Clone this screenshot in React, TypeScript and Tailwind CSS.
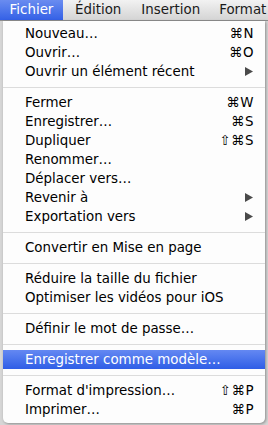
import { ReactNode } from 'react';

type Item =
  | { kind: 'sep' }
  | { kind: 'item'; label: string; shortcut?: string; sub?: boolean; active?: boolean };

const items: Item[] = [
  { kind: 'item', label: 'Nouveau…', shortcut: '⌘N' },
  { kind: 'item', label: 'Ouvrir…', shortcut: '⌘O' },
  { kind: 'item', label: 'Ouvrir un élément récent', sub: true },
  { kind: 'sep' },
  { kind: 'item', label: 'Fermer', shortcut: '⌘W' },
  { kind: 'item', label: 'Enregistrer…', shortcut: '⌘S' },
  { kind: 'item', label: 'Dupliquer', shortcut: '⇧⌘S' },
  { kind: 'item', label: 'Renommer…' },
  { kind: 'item', label: 'Déplacer vers…' },
  { kind: 'item', label: 'Revenir à', sub: true },
  { kind: 'item', label: 'Exportation vers', sub: true },
  { kind: 'sep' },
  { kind: 'item', label: 'Convertir en Mise en page' },
  { kind: 'sep' },
  { kind: 'item', label: 'Réduire la taille du fichier' },
  { kind: 'item', label: 'Optimiser les vidéos pour iOS' },
  { kind: 'sep' },
  { kind: 'item', label: 'Définir le mot de passe…' },
  { kind: 'sep' },
  { kind: 'item', label: 'Enregistrer comme modèle…', active: true },
  { kind: 'sep' },
  { kind: 'item', label: "Format d'impression…", shortcut: '⇧⌘P' },
  { kind: 'item', label: 'Imprimer…', shortcut: '⌘P' },
];

const Arrow = () => (
  <svg width="8" height="9" viewBox="0 0 8 9" className="mr-[1px]">
    <path d="M0 0 L8 4.5 L0 9 Z" fill="#4a4a4a" />
  </svg>
);

const BarLabel = ({ children, className }: { children: ReactNode; className: string }) => (
  <div className={'h-full flex items-center ' + className}>{children}</div>
);

const App = () => {
  return (
    <div
      className="w-[268px] h-[425px] overflow-hidden bg-[#d6d6d6] flex flex-col text-[13.4px] leading-none"
      style={{ fontFamily: '"Lucida Grande", "DejaVu Sans", sans-serif' }}
    >
      {/* Menu bar */}
      <div className="h-[21px] shrink-0 flex items-stretch whitespace-nowrap bg-gradient-to-b from-[#f2f2f2] to-[#d4d4d4] border-b border-[#8e8e8e] text-[#1a1a1a]">
        <BarLabel className="w-[63px] justify-center text-white bg-gradient-to-b from-[#6a8cf0] to-[#3460e6]">
          Fichier
        </BarLabel>
        <BarLabel className="ml-[12px]">Édition</BarLabel>
        <BarLabel className="ml-[20px]">Insertion</BarLabel>
        <BarLabel className="ml-[19px]">Format</BarLabel>
      </div>

      {/* Dropdown */}
      <div className="ml-[3px] w-[262px] flex-1 mb-[2px] bg-[#fdfdfd] rounded-b-[5px] shadow-[1px_1px_3px_rgba(0,0,0,0.35)] pt-[3px] pb-[4px] text-black">
        {items.map((it, i) =>
          it.kind === 'sep' ? (
            <div key={i} className="h-[12px] flex items-center">
              <div className="h-px w-full bg-[#dcdcdc]" />
            </div>
          ) : (
            <div
              key={i}
              className={
                'h-[19px] flex items-center justify-between pl-[22px] pr-[11px] ' +
                (it.active ? 'text-white bg-gradient-to-b from-[#6488f2] to-[#2f5de6]' : '')
              }
            >
              <span>{it.label}</span>
              {it.shortcut && <span className="tracking-[0.5px]">{it.shortcut}</span>}
              {it.sub && <Arrow />}
            </div>
          )
        )}
      </div>
    </div>
  );
};

export default App;
